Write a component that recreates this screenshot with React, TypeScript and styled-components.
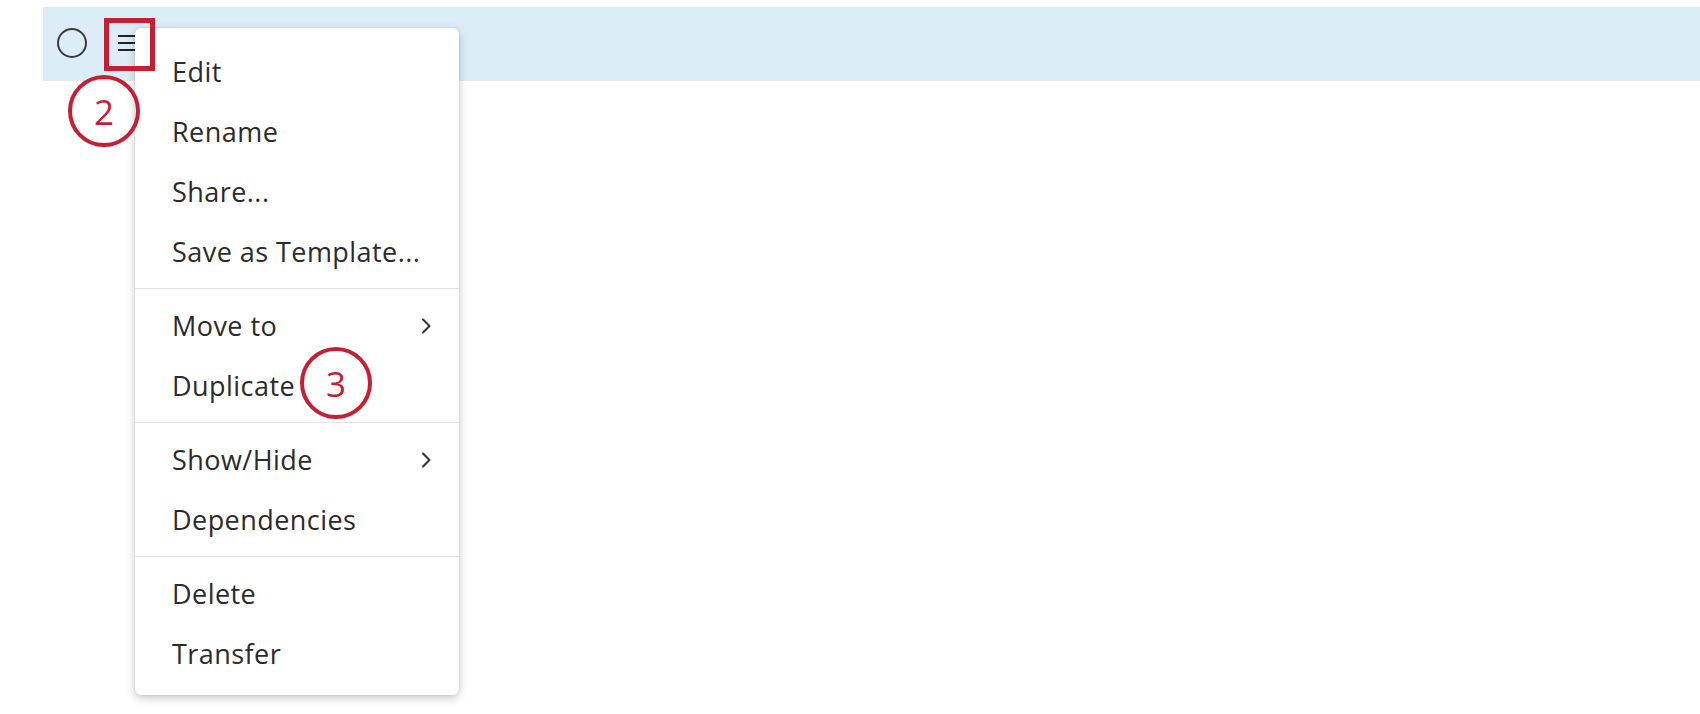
import React from "react";
import styled, { createGlobalStyle } from "styled-components";

const GlobalStyle = createGlobalStyle`
  html, body {
    margin: 0;
    padding: 0;
    background: #ffffff;
    font-family: "Open Sans", "Liberation Sans", sans-serif;
  }
  * {
    box-sizing: border-box;
  }
`;

const Page = styled.div`
  position: relative;
  width: 1700px;
  height: 714px;
  overflow: hidden;
  padding-top: 7px;
`;

const Row = styled.div`
  margin-left: 43px;
  height: 74px;
  background: #ddedf7;
  border-top: 1px solid #e6e9eb;
  border-bottom: 1px solid #e6e9eb;
  display: flex;
  align-items: center;
  padding-left: 14px;
  gap: 31px;
`;

const Radio = styled.span`
  width: 30px;
  height: 30px;
  border-radius: 50%;
  border: 2.5px solid #3a3a3a;
  margin-top: -2px;
`;

const MenuIcon = styled.span`
  display: flex;
  flex-direction: column;
  gap: 5px;
  width: 17px;
  margin-top: -3px;
  & > i {
    display: block;
    height: 2px;
    background: #222;
  }
`;

const Menu = styled.ul`
  position: absolute;
  left: 135px;
  top: 28px;
  width: 324px;
  margin: 0;
  padding: 13.5px 0 11.5px;
  list-style: none;
  background: #ffffff;
  border-radius: 6px;
  box-shadow: 0 3px 10px rgba(0, 0, 0, 0.22), 0 0 2px rgba(0, 0, 0, 0.12);
`;

const Item = styled.li`
  height: 60px;
  display: flex;
  align-items: center;
  justify-content: space-between;
  padding: 0 27px 0 37px;
  font-size: 27px;
  line-height: 60px;
  letter-spacing: 0.45px;
  color: #2b2b2b;
  white-space: nowrap;
`;

const Divider = styled.li`
  height: 1px;
  margin: 6.5px 0;
  background: #e4e4e4;
`;

const Chevron = () => (
  <svg width="12" height="16" viewBox="0 0 12 16" fill="none">
    <path d="M3 1.5 L9.5 8 L3 14.5" stroke="#333" strokeWidth="2" strokeLinecap="round" strokeLinejoin="round" />
  </svg>
);

const Highlight = styled.div`
  position: absolute;
  left: 104px;
  top: 18px;
  width: 51px;
  height: 53px;
  border: 5px solid #c41f33;
`;

const Callout = styled.div<{ $x: number; $y: number }>`
  position: absolute;
  left: ${(p) => p.$x - 36}px;
  top: ${(p) => p.$y - 36}px;
  width: 72px;
  height: 72px;
  border-radius: 50%;
  border: 4.5px solid #c41f33;
  background: transparent;
  display: flex;
  align-items: center;
  justify-content: center;
  color: #c41f33;
  font-size: 35px;
  line-height: 1;
`;

type Entry = { label: string; sub?: boolean } | "divider";

const entries: Entry[] = [
  { label: "Edit" },
  { label: "Rename" },
  { label: "Share..." },
  { label: "Save as Template..." },
  "divider",
  { label: "Move to", sub: true },
  { label: "Duplicate" },
  "divider",
  { label: "Show/Hide", sub: true },
  { label: "Dependencies" },
  "divider",
  { label: "Delete" },
  { label: "Transfer" },
];

const App = () => {
  return (
    <>
      <GlobalStyle />
      <Page>
        <Row>
          <Radio />
          <MenuIcon>
            <i />
            <i />
            <i />
          </MenuIcon>
        </Row>
        <Menu>
          {entries.map((e, i) =>
            e === "divider" ? (
              <Divider key={i} />
            ) : (
              <Item key={i}>
                <span>{e.label}</span>
                {e.sub && <Chevron />}
              </Item>
            )
          )}
        </Menu>
        <Highlight />
        <Callout $x={104} $y={111}>2</Callout>
        <Callout $x={336} $y={383}>3</Callout>
      </Page>
    </>
  );
};

export default App;
